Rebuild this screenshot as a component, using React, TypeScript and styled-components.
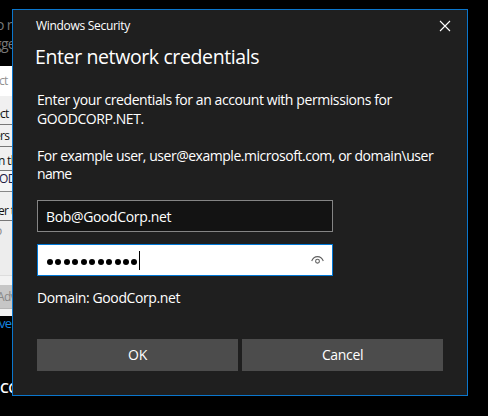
import React from "react";
import styled, { createGlobalStyle } from "styled-components";

const GlobalStyle = createGlobalStyle`
  * { box-sizing: border-box; }
  body { margin: 0; background: #000; }
`;

const Desktop = styled.main`
  position: relative;
  width: 488px;
  height: 416px;
  overflow: hidden;
  background: #000;
  font-family: "Open Sans", "Noto Sans", sans-serif;
`;

const Backdrop = styled.div`
  display: flex;
  flex-direction: column;
  width: 12px;
  height: 416px;
  overflow: hidden;
`;

const Strip = styled.div<{
  $h: number;
  $bg?: string;
  $fg?: string;
  $size?: number;
  $line?: number;
  $rule?: string;
  $shift?: number;
  $bold?: boolean;
}>`
  flex: none;
  height: ${(p) => p.$h}px;
  background: ${(p) => p.$bg ?? "#000"};
  color: ${(p) => p.$fg ?? "#101010"};
  font-size: ${(p) => p.$size ?? 12}px;
  font-weight: ${(p) => (p.$bold ? 600 : 400)};
  line-height: ${(p) => p.$line ?? p.$h}px;
  border-bottom: ${(p) => (p.$rule ? `1px solid ${p.$rule}` : "none")};
  text-indent: ${(p) => p.$shift ?? 0}px;
  letter-spacing: -0.7px;
  white-space: nowrap;
  overflow: hidden;
`;

const Dialog = styled.section`
  position: absolute;
  left: 12px;
  top: 9px;
  width: 456px;
  height: 387px;
  border: 1px solid #0b76cc;
  background: #1f1f1f;
  color: #fff;
  padding: 0 24px;
  display: flex;
  flex-direction: column;
`;

const TitleBar = styled.header`
  display: flex;
  justify-content: space-between;
  height: 33px;
  margin-left: -1px;
  padding-top: 8px;
`;

const Caption = styled.span`
  font-size: 12px;
  line-height: 16px;
  letter-spacing: -0.3px;
`;

const CloseButton = styled.button`
  width: 12px;
  height: 12px;
  margin: 2px -8px 0 0;
  padding: 0;
  border: 0;
  background: none;
  display: flex;
`;

const Heading = styled.h1`
  margin: 0 0 0 -2px;
  height: 44px;
  font-size: 19.5px;
  font-weight: 400;
  line-height: 28px;
  letter-spacing: -0.38px;
  white-space: nowrap;
`;

const Line = styled.div<{ $track: number }>`
  font-size: 14px;
  line-height: 19px;
  height: 18.6px;
  white-space: pre;
  letter-spacing: ${(p) => p.$track}px;
`;

const Message = styled.div`
  height: 113px;
  padding-top: 3px;
`;

const Field = styled.div<{ $active?: boolean }>`
  width: 296px;
  height: 32px;
  margin-bottom: 12px;
  padding: 0 8px;
  display: flex;
  align-items: center;
  border: 1px solid ${(p) => (p.$active ? "#0078d7" : "#858585")};
  background: ${(p) => (p.$active ? "#fff" : "#131313")};
`;

const Mask = styled.div`
  display: flex;
  gap: 2.45px;
  margin: 4px 0 0 1px;
`;

const Dot = styled.i`
  width: 6px;
  height: 6px;
  border-radius: 50%;
  background: #000;
`;

const Caret = styled.i`
  width: 1px;
  height: 19px;
  margin-left: 2px;
  background: #000;
`;

const Reveal = styled.svg`
  margin-left: auto;
`;

const Actions = styled.div`
  display: flex;
  gap: 4px;
  margin-top: 32px;
`;

const Button = styled.button`
  width: 201px;
  height: 32px;
  flex: none;
  padding: 0;
  border: 0;
  background: #4c4c4c;
  color: #fff;
  font: 14px/20px "Open Sans", "Noto Sans", sans-serif;
  letter-spacing: -0.35px;
`;

export default function App() {
  return (
    <>
      <GlobalStyle />
      <Desktop>
        <Backdrop>
          <Strip $h={15} />
          <Strip $h={19} $fg="#777" $size={14} $shift={-4}>o r</Strip>
          <Strip $h={32} $fg="#777" $size={14} $line={19} $shift={-6}>gge</Strip>
          <Strip $h={30} $bg="#fff" $fg="#929292" $shift={-1}>ct</Strip>
          <Strip $h={29} $bg="#f0f0f0" $line={36} $rule="#777" $shift={-6}>ect</Strip>
          <Strip $h={22} $bg="#f0f0f0" $rule="#777" $shift={-6}>ers</Strip>
          <Strip $h={24} $bg="#f0f0f0" $line={27} $rule="#777" $shift={-2}>n th</Strip>
          <Strip $h={21} $bg="#f5f5f5" $fg="#202044" $line={15} $rule="#888" $shift={-1}>OD</Strip>
          <Strip $h={29} $bg="#f0f0f0" $line={37} $rule="#777" $shift={-2}>er t</Strip>
          <Strip $h={55} $bg="#ededed" $fg="#888" $line={19} $rule="#ddd" $shift={-5}>o</Strip>
          <Strip $h={9} $bg="#f2f2f2" />
          <Strip $h={24} $bg="#c6c6c6" $fg="#888" $rule="#b5b5b5" $shift={-3}>Adv</Strip>
          <Strip $h={7} $bg="#f0f0f0" />
          <Strip $h={14} $fg="#1687e0" $size={13} $shift={-1}>ve</Strip>
          <Strip $h={46} />
          <Strip $h={24} $fg="#fff" $size={14} $bold>CC</Strip>
        </Backdrop>
        <Dialog>
          <TitleBar>
            <Caption>Windows Security</Caption>
            <CloseButton aria-label="Close">
              <svg width="12" height="12" viewBox="0 0 12 12" fill="none" stroke="#fff" strokeWidth="1.1">
                <path d="M1 1l10 10M11 1L1 11" />
              </svg>
            </CloseButton>
          </TitleBar>
          <Heading>Enter network credentials</Heading>
          <Message>
            <Line $track={-0.41}>Enter your credentials for an account with permissions for</Line>
            <Line $track={-0.43}>GOODCORP.NET.</Line>
            <Line $track={0}> </Line>
            <Line $track={-0.47}>For example user, user@example.microsoft.com, or domain\user</Line>
            <Line $track={-0.7}>name</Line>
          </Message>
          <Field>
            <Line $track={-0.36}>Bob@GoodCorp.net</Line>
          </Field>
          <Field $active>
            <Mask>
              {Array.from({ length: 11 }, (_, i) => (
                <Dot key={i} />
              ))}
            </Mask>
            <Caret />
            <Reveal width="13" height="10" viewBox="0 0 13 10" fill="none" stroke="#606060" strokeWidth="1.1">
              <path d="M.7 6C1.800 3.200 3.800 1.600 6.500 1.600S11.200 3.200 12.300 6" />
              <circle cx="6.500" cy="6.200" r="1.900" />
            </Reveal>
          </Field>
          <Line $track={-0.4}>Domain: GoodCorp.net</Line>
          <Actions>
            <Button>OK</Button>
            <Button>Cancel</Button>
          </Actions>
        </Dialog>
      </Desktop>
    </>
  );
}
